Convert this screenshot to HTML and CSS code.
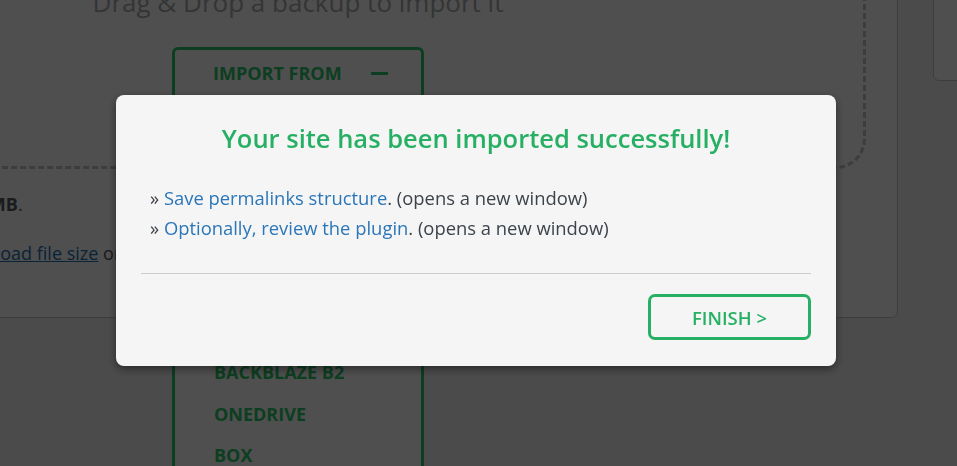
FILE: index.html
```html
<!DOCTYPE html>
<html lang="en">
<head>
<meta charset="utf-8">
<title>Import</title>
<link rel="stylesheet" href="styles.css">
</head>
<body>
<div class="page">
  <section class="card">
    <div class="dropzone">
      <h1 class="drop-title">Drag &amp; Drop a backup to import it</h1>
      <div class="import">
        <div class="import-btn"><span>IMPORT FROM</span><i class="minus"></i></div>
        <ul class="import-menu">
          <li>FILE</li>
          <li>URL</li>
          <li>FTP</li>
          <li>DROPBOX</li>
          <li>GOOGLE DRIVE</li>
          <li>AMAZON S3</li>
          <li>BACKBLAZE B2</li>
          <li>ONEDRIVE</li>
          <li>BOX</li>
        </ul>
      </div>
    </div>
    <div class="notes">
      <p class="note">Maximum upload file size: <strong>512 MB</strong>.</p>
      <p class="note">How do I increase maximum <a href="#">upload file size</a> or import via FTP?</p>
    </div>
  </section>
  <aside class="side-card"></aside>
</div>

<div class="overlay"></div>

<div class="modal" role="dialog">
  <h2 class="modal-title">Your site has been imported successfully!</h2>
  <p class="modal-line">&raquo; <a href="#">Save permalinks structure</a>. (opens a new window)</p>
  <p class="modal-line">&raquo; <a href="#">Optionally, review the plugin</a>. (opens a new window)</p>
  <hr class="modal-sep">
  <div class="modal-footer">
    <button class="finish-btn">FINISH &gt;</button>
  </div>
</div>
</body>
</html>
```
FILE: styles.css
```css
* { box-sizing: border-box; }

html, body {
  margin: 0;
  padding: 0;
  overflow: hidden;
}

body {
  background: #f0f0f1;
  font-family: "Open Sans", "Noto Sans", sans-serif;
  color: #50575e;
  width: 957px;
  height: 466px;
}

.page {
  display: flex;
  align-items: flex-start;
  gap: 35px;
  margin: -60px 0 0 -300px;
}

.card {
  flex: 0 0 1198px;
  background: #fff;
  border: 1px solid #c3c4c7;
  border-radius: 6px;
  padding: 20px 31px 50px 29px;
}

.side-card {
  flex: 0 0 200px;
  height: 141px;
  background: #fff;
  border: 1px solid #c3c4c7;
  border-radius: 6px;
}

.dropzone {
  border: 3px dashed #c3c4c7;
  border-radius: 30px;
  padding: 21px 0 70px;
  text-align: center;
}

.drop-title {
  margin: 0 0 28px;
  font-size: 26px;
  line-height: 34px;
  font-weight: 400;
  color: #a7aaad;
}

.import {
  position: relative;
  width: 252px;
  margin: 0 auto;
  text-align: left;
}

.import-btn {
  display: flex;
  align-items: center;
  gap: 29px;
  padding: 11px 0 11px 38px;
  border: 3px solid #2bc86c;
  border-bottom: 0;
  border-radius: 6px 6px 0 0;
  color: #2bc86c;
  font-size: 18px;
  line-height: 24px;
  font-weight: 700;
}

.minus {
  display: block;
  width: 17px;
  height: 3px;
  background: #2bc86c;
}

.import-menu {
  position: absolute;
  top: 100%;
  left: 0;
  right: 0;
  margin: 0;
  padding: 7px 0 0 39px;
  list-style: none;
  border: 3px solid #2bc86c;
  border-top: 0;
  background: #fff;
}

.import-menu li {
  font-size: 18px;
  line-height: 41.5px;
  font-weight: 700;
  color: #2bc86c;
}

.note {
  margin: 22px 0 0;
  font-size: 18px;
  line-height: 27px;
  color: #50575e;
}

.note strong { color: #50575e; }

.note a { color: #2271b1; }

.overlay {
  position: fixed;
  inset: 0;
  background: rgba(0, 0, 0, 0.69);
}

.modal {
  position: fixed;
  left: 116px;
  top: 95px;
  width: 720px;
  height: 271px;
  background: #f5f5f5;
  border-radius: 8px;
  box-shadow: 0 3px 10px rgba(0, 0, 0, 0.45);
  padding: 27px 25px 26px;
  display: flex;
  flex-direction: column;
}

.modal-title {
  margin: 0 0 29px;
  text-align: center;
  font-size: 25.5px;
  line-height: 32px;
  font-weight: 600;
  color: #27b063;
}

.modal-line {
  margin: 0;
  padding-left: 9px;
  font-size: 18.4px;
  line-height: 30px;
  color: #3c434a;
}

.modal-line a {
  color: #2a76b8;
  text-decoration: none;
}

.modal-sep {
  margin: 30px 0 0;
  border: 0;
  border-top: 1px solid #cdcdcd;
  height: 0;
}

.modal-footer {
  display: flex;
  justify-content: flex-end;
  margin-top: 20px;
}

.finish-btn {
  width: 163px;
  height: 46px;
  border: 3px solid #27b063;
  border-radius: 7px;
  background: transparent;
  color: #27b063;
  font-family: "Open Sans", "Noto Sans", sans-serif;
  font-size: 18.5px;
  font-weight: 600;
  padding: 0;
}
```
